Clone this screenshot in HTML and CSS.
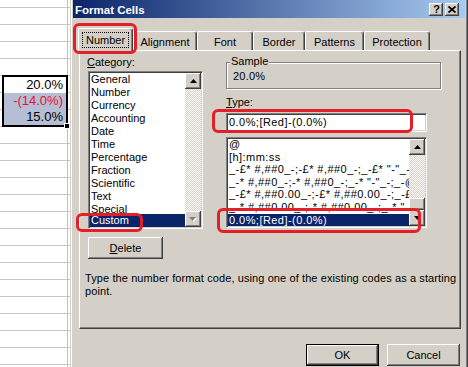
FILE: index.html
```html
<!DOCTYPE html>
<html>
<head>
<meta charset="utf-8">
<link rel="stylesheet" href="styles.css">
</head>
<body>
<div class="screen">
  <div class="sheet">
    <div class="sel">
      <div class="cell">20.0%</div>
      <div class="cell hl neg">-(14.0%)</div>
      <div class="cell hl">15.0%</div>
      <span class="handle"></span>
    </div>
  </div>
  <div class="dialog">
    <div class="titlebar">
      <span class="title">Format Cells</span>
      <span class="tbtn raised q">?</span>
      <span class="tbtn raised"><svg width="8" height="7" viewBox="0 0 8 7"><path d="M0.5 0.5 L7.5 6.5 M7.5 0.5 L0.5 6.5" stroke="#000" stroke-width="1.7" fill="none"/></svg></span>
    </div>
    <div class="tabs">
      <div class="tab active t-number"><span class="focus">Number</span></div>
      <div class="tab t-align">Alignment</div>
      <div class="tab t-font">Font</div>
      <div class="tab t-border">Border</div>
      <div class="tab t-pat">Patterns</div>
      <div class="tab t-prot">Protection</div>
    </div>
    <div class="panel">
      <div class="cols">
        <div class="left">
          <div class="lbl cat-lbl"><u>C</u>ategory:</div>
          <div class="listbox cat">
            <div class="items">
              <div class="item">General</div>
              <div class="item">Number</div>
              <div class="item">Currency</div>
              <div class="item">Accounting</div>
              <div class="item">Date</div>
              <div class="item">Time</div>
              <div class="item">Percentage</div>
              <div class="item">Fraction</div>
              <div class="item">Scientific</div>
              <div class="item">Text</div>
              <div class="item cut">Special</div>
              <div class="item selected">Custom</div>
            </div>
            <div class="vscroll">
              <div class="sbtn raised"><svg width="7" height="4" viewBox="0 0 7 4"><path d="M3.5 0 L7 4 L0 4 Z" fill="#000"/></svg></div>
              <div class="track"></div>
              <div class="sbtn raised"><svg width="8" height="5" viewBox="0 0 8 5"><path d="M1 1 L8 1 L4.5 5 Z" fill="#fff"/><path d="M0 0 L7 0 L3.5 4 Z" fill="#808080"/></svg></div>
            </div>
          </div>
          <div class="btn raised delete"><u>D</u>elete</div>
        </div>
        <div class="right">
          <div class="group">
            <span class="glabel">Sample</span>
            <div class="sample">20.0%</div>
          </div>
          <div class="lbl type-lbl"><u>T</u>ype:</div>
          <div class="input">0.0%;[Red]-(0.0%)</div>
          <div class="listbox typelist">
            <div class="items titems">
              <div class="trow">@</div>
              <div class="trow">[h]:mm:ss</div>
              <div class="trow">_-£* #,##0_-;-£* #,##0_-;_-£* "-"_-;_-@_-</div>
              <div class="trow">_-* #,##0_-;-* #,##0_-;_-* "-"_-;_-@_-</div>
              <div class="trow">_-£* #,##0.00_-;-£* #,##0.00_-;_-£* "-"??_-;_-@_-</div>
              <div class="trow">_-* #,##0.00_-;-* #,##0.00_-;_-* "-"??_-;_-@_-</div>
              <div class="trow tsel">0.0%;[Red]-(0.0%)</div>
            </div>
            <div class="vscroll">
              <div class="sbtn raised"><svg width="7" height="4" viewBox="0 0 7 4"><path d="M3.5 0 L7 4 L0 4 Z" fill="#000"/></svg></div>
              <div class="track"></div>
              <div class="thumb raised"></div>
              <div class="sbtn raised"><svg width="7" height="4" viewBox="0 0 7 4"><path d="M0 0 L7 0 L3.5 4 Z" fill="#000"/></svg></div>
            </div>
          </div>
        </div>
      </div>
      <p class="desc">Type the number format code, using one of the existing codes as a starting point.</p>
    </div>
    <div class="buttons">
      <div class="btn raised default">OK</div>
      <div class="btn raised">Cancel</div>
    </div>
  </div>
  <div class="mark m-tab"></div>
  <div class="mark m-input"></div>
  <div class="mark m-sel"></div>
  <div class="mark m-custom"></div>
</div>
</body>
</html>
```
FILE: styles.css
```css
* { box-sizing: border-box; }
html, body { margin: 0; padding: 0; }
body {
  width: 468px;
  height: 367px;
  overflow: hidden;
  background: #fff;
  font-family: "Liberation Sans", Arial, sans-serif;
  font-size: 11px;
  color: #000;
}
.screen {
  position: relative;
  display: flex;
  width: 468px;
  height: 367px;
  overflow: hidden;
}

/* spreadsheet */
.sheet {
  width: 70px;
  flex: none;
  background-color: #fff;
  background-image:
    linear-gradient(to right, transparent 67px, #c0c0c0 67px, #c0c0c0 68px, transparent 68px),
    repeating-linear-gradient(to bottom, transparent 0, transparent 7px, #c6c6c6 7px, #c6c6c6 8px, transparent 8px, transparent 17px);
}
.sel {
  position: relative;
  margin: 75px 0 0 2px;
  width: 66px;
  border: 2px solid #000;
  background: #fff;
}
.cell {
  height: 16px;
  line-height: 16px;
  text-align: right;
  padding-right: 3px;
  font-size: 13px;
}
.hl { background: #b6bed6; }
.neg { color: #e4102c; }
.handle {
  position: absolute;
  right: -4px;
  bottom: -4px;
  width: 6px;
  height: 6px;
  background: #000;
  border: 1px solid #fff;
}

/* dialog */
.dialog {
  flex: 1;
  display: flex;
  flex-direction: column;
  background: #d4d0c8;
  border-left: 1px solid #d4d0c8;
  border-right: 1px solid #404040;
  box-shadow: inset 1px 0 #fff, inset -1px 0 #808080;
}
.titlebar {
  margin: 0 2px;
  height: 18px;
  display: flex;
  align-items: center;
  padding: 0 6px 0 2px;
  background: linear-gradient(to right, #0a246a, #a6caf0);
}
.title {
  flex: 1;
  color: #fff;
  font-weight: bold;
  font-size: 11.5px;
  padding-top: 1px;
}
.raised {
  background: #d4d0c8;
  box-shadow: inset -1px -1px #404040, inset 1px 1px #fff, inset -2px -2px #808080, inset 2px 2px #d4d0c8;
}
.tbtn {
  width: 14px;
  height: 13px;
  margin-left: 2px;
  display: flex;
  align-items: center;
  justify-content: center;
}
.tbtn.q {
  font-weight: bold;
  font-size: 11px;
  line-height: 13px;
  padding-left: 1px;
}

/* tabs */
.tabs {
  display: flex;
  align-items: flex-end;
  height: 22px;
  margin-top: 10px;
  padding-left: 7px;
  position: relative;
  z-index: 1;
}
.tab {
  height: 19px;
  display: flex;
  align-items: center;
  justify-content: center;
  padding-top: 1px;
  border-top: 1px solid #fff;
  border-left: 1px solid #fff;
  border-right: 1px solid #404040;
  border-radius: 2px 3px 0 0;
  box-shadow: inset -1px 0 #808080;
  background: #d4d0c8;
}
.tab.active {
  height: 23px;
  margin-bottom: -1px;
  padding-top: 0;
  padding-bottom: 1px;
}
.focus {
  outline: 1px dotted #000;
  outline-offset: 0;
  padding: 1px 3px;
  line-height: 12px;
}
.t-number { width: 55px; }
.t-align { width: 64px; }
.t-font { width: 56px; }
.t-border { width: 52px; }
.t-pat { width: 59px; }
.t-prot { width: 66px; }

/* panel */
.panel {
  margin: 0 6px 0 8px;
  height: 279px;
  border-top: 1px solid #fff;
  border-left: 1px solid #fff;
  border-right: 1px solid #404040;
  border-bottom: 1px solid #404040;
  box-shadow: inset -1px -1px #808080;
}
.cols {
  display: flex;
  padding: 5px 0 0 8px;
}
.left {
  width: 115px;
  display: flex;
  flex-direction: column;
  align-items: flex-start;
}
.right {
  width: 215px;
  margin-left: 23px;
  display: flex;
  flex-direction: column;
}
.lbl {
  line-height: 13px;
  height: 13px;
}
.cat-lbl { margin-left: -1px; }

.listbox {
  display: flex;
  border-top: 1px solid #808080;
  border-left: 1px solid #808080;
  border-right: 1px solid #fff;
  border-bottom: 1px solid #fff;
  box-shadow: inset 1px 1px #404040, inset -1px -1px #d4d0c8;
  background: #fff;
  padding: 1px;
}
.listbox .items {
  flex: 1;
  min-width: 0;
  overflow: hidden;
  display: flex;
  flex-direction: column;
}
.cat {
  margin-top: 2px;
  width: 115px;
  height: 158px;
}
.item {
  height: 13px;
  line-height: 13px;
  padding-left: 1px;
  white-space: nowrap;
  flex: none;
}
.item.cut {
  height: 11px;
  overflow: hidden;
}
.selected, .tsel {
  background: #0a246a;
  color: #fff;
}
.vscroll {
  width: 16px;
  flex: none;
  display: flex;
  flex-direction: column;
}
.sbtn {
  height: 16px;
  flex: none;
  display: flex;
  align-items: center;
  justify-content: center;
}
.track {
  flex: 1;
  background-color: #fff;
  background-image: conic-gradient(#d4d0c8 0 25%, transparent 0 50%, #d4d0c8 0 75%, transparent 0);
  background-size: 2px 2px;
}
.thumb {
  height: 12px;
  flex: none;
}
.btn {
  height: 22px;
  width: 73px;
  display: flex;
  align-items: center;
  justify-content: center;
}
.delete {
  margin-top: 8px;
  width: 75px;
}

.group {
  margin-top: 6px;
  height: 27px;
  border: 1px solid #808080;
  box-shadow: inset 1px 1px #fff, 1px 1px #fff;
  display: flex;
  flex-direction: column;
  align-items: flex-start;
}
.glabel {
  margin: -8px 0 0 3px;
  padding: 0 1px;
  line-height: 13px;
  background: #d4d0c8;
}
.sample {
  margin: 2px 0 0 6px;
  line-height: 13px;
  letter-spacing: 0.2px;
}
.type-lbl { margin-top: 7px; }
.input {
  margin-top: 4px;
  width: 201px;
  height: 19px;
  background: #fff;
  border-top: 1px solid #808080;
  border-left: 1px solid #808080;
  border-right: 1px solid #fff;
  border-bottom: 1px solid #fff;
  box-shadow: inset 1px 1px #404040, inset -1px -1px #d4d0c8;
  padding: 0 3px 0 2px;
  line-height: 17px;
  white-space: nowrap;
  letter-spacing: 0.45px;
}
.typelist {
  margin-top: 5px;
  width: 201px;
  height: 91px;
}
.titems { margin-top: -1px; }
.trow {
  height: 12.5px;
  line-height: 12.5px;
  padding-left: 1px;
  white-space: nowrap;
  flex: none;
  letter-spacing: 0.45px;
}
.trow.tsel {
  height: 13px;
  line-height: 13px;
  margin-top: 1px;
}

.desc {
  margin: 13px 0 0 5px;
  width: 372px;
  line-height: 13px;
  letter-spacing: 0.1px;
}

.buttons {
  display: flex;
  justify-content: flex-end;
  gap: 8px;
  margin: 15px 7px 0 0;
}
.default {
  border: 1px solid #000;
}

/* red annotation marks */
.mark {
  position: absolute;
  border: 3px solid #e3202a;
  border-radius: 6px;
  z-index: 5;
}
.m-tab { left: 73px; top: 23px; width: 64px; height: 31px; }
.m-input { left: 212px; top: 109px; width: 201px; height: 24px; }
.m-sel { left: 217px; top: 208px; width: 204px; height: 25px; }
.m-custom { left: 76px; top: 213px; width: 67px; height: 19px; }
```
